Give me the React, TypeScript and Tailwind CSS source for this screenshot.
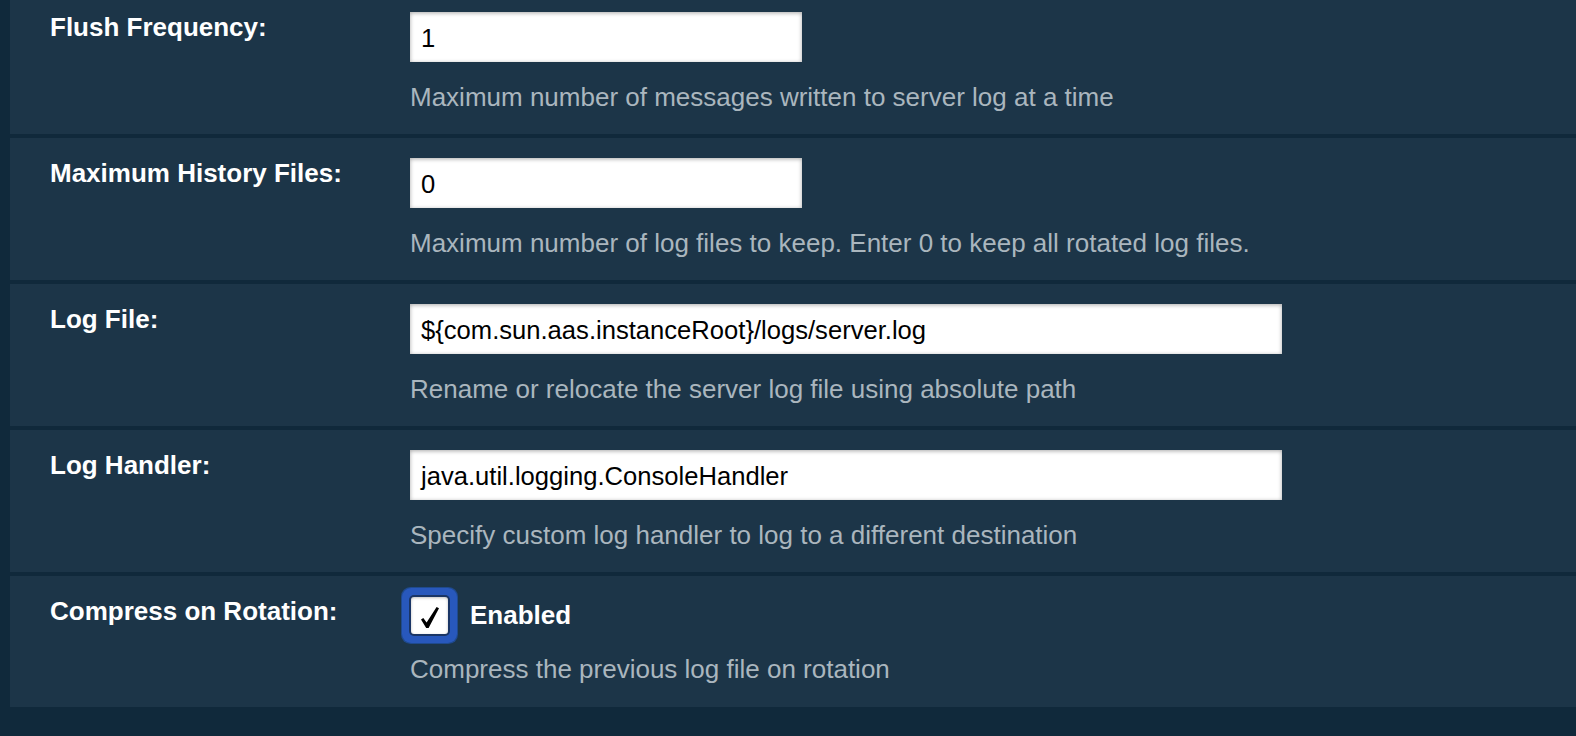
import React from "react";

type Row = {
  label: string;
  value?: string;
  width?: string;
  help: string;
  checkbox?: boolean;
};

const rows: Row[] = [
  { label: "Flush Frequency:", value: "1", width: "w-[392px]", help: "Maximum number of messages written to server log at a time" },
  { label: "Maximum History Files:", value: "0", width: "w-[392px]", help: "Maximum number of log files to keep. Enter 0 to keep all rotated log files." },
  { label: "Log File:", value: "${com.sun.aas.instanceRoot}/logs/server.log", width: "w-[872px]", help: "Rename or relocate the server log file using absolute path" },
  { label: "Log Handler:", value: "java.util.logging.ConsoleHandler", width: "w-[872px]", help: "Specify custom log handler to log to a different destination" },
  { label: "Compress on Rotation:", checkbox: true, help: "Compress the previous log file on rotation" },
];

export default function App() {
  return (
    <div
      className="h-[736px] w-full overflow-hidden bg-[#10293b] pl-[10px]"
      style={{ fontFamily: '"Liberation Sans", Arial, Helvetica, sans-serif' }}
    >
      <div className="-mt-2 flex flex-col gap-[4px]">
        {rows.map((r) => (
          <div key={r.label} className="flex bg-[#1c3548] pl-[40px] pt-[20px]">
            <div className="w-[360px] shrink-0 text-[26px] font-bold leading-[30px] text-white">
              {r.label}
            </div>
            <div className={`flex flex-col ${r.checkbox ? "pb-[23px]" : "pb-[22px]"}`}>
              {r.checkbox ? (
                <div className="flex h-[38px] items-center pl-px">
                  <span className="flex h-[37px] w-[37px] items-center justify-center rounded-[3px] bg-white shadow-[inset_0_1px_3px_rgba(0,0,0,0.25),0_0_0_2px_#1a3565,0_0_0_9px_#2858bc,0_0_0_10px_#1f4a8e]">
                    <svg width="18" height="21" viewBox="0 0 18 21" className="mt-[4px]">
                      <polygon points="0,12.5 2.3,11 5.6,15.6 15.6,0 18,1.2 7.6,21 5.2,21" fill="#000" />
                    </svg>
                  </span>
                  <span className="ml-[22px] text-[26px] font-bold leading-[30px] text-white">Enabled</span>
                </div>
              ) : (
                <div
                  className={`${r.width} flex h-[50px] items-center bg-white pl-[11px] pt-[2px] text-[25.6px] text-black shadow-[inset_0_1px_4px_rgba(0,0,0,0.35)]`}
                >
                  {r.value}
                </div>
              )}
              <div className="mt-[20px] text-[26px] leading-[30px] text-[#aab6be]">{r.help}</div>
            </div>
          </div>
        ))}
      </div>
    </div>
  );
}
